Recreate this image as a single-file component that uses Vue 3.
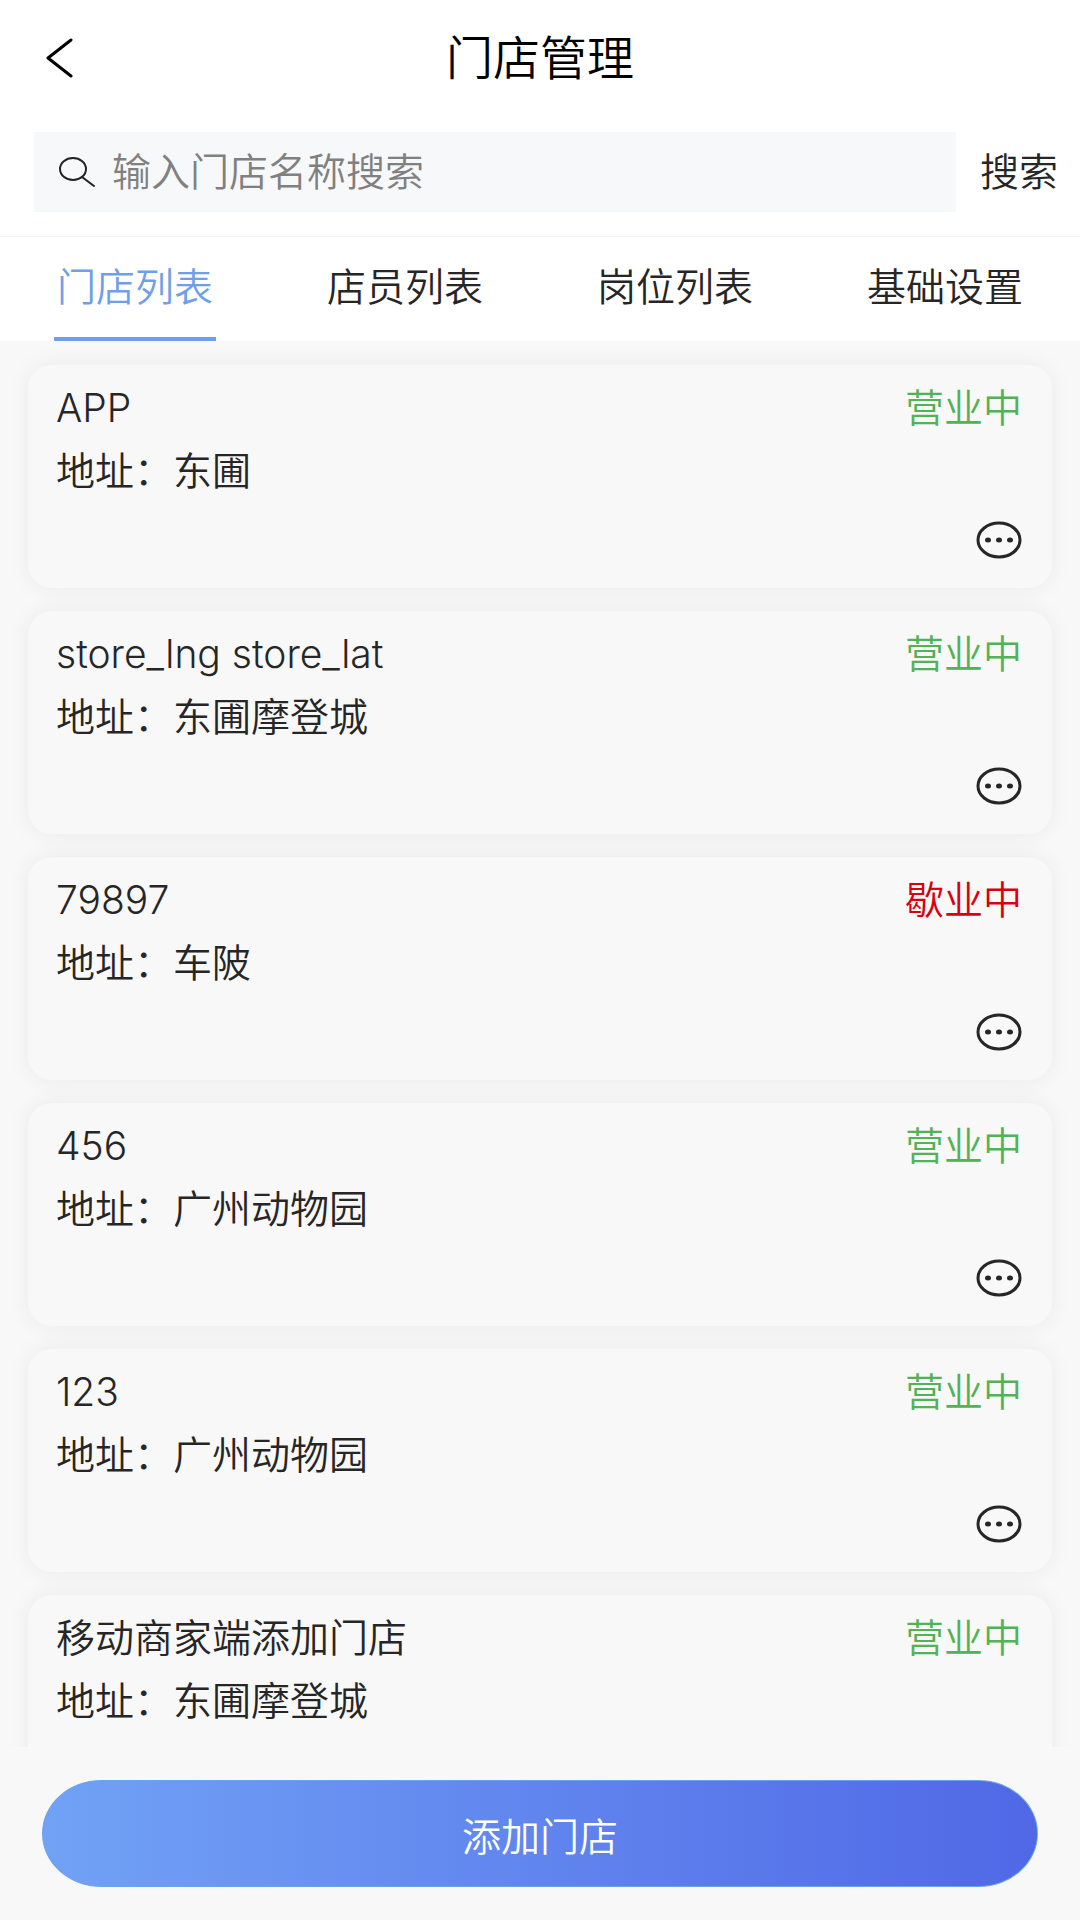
<template>
  <div class="store-page">
    <header class="header">
      <button type="button" class="back-btn" aria-label="返回">
        <svg width="30" height="40" viewBox="0 0 30 40" fill="none">
          <path d="M26 2L3 20L26 38" stroke="#000" stroke-width="3" stroke-linecap="round" stroke-linejoin="round" />
        </svg>
      </button>
      <h1>门店管理</h1>
    </header>

    <form class="search-bar" @submit.prevent="handleSearch">
      <label class="search-box">
        <svg width="38" height="32" viewBox="0 0 38 32" fill="none" stroke="#222" stroke-width="2">
          <ellipse cx="15" cy="13" rx="13" ry="11" />
          <path d="M24 21L36 30" stroke-linecap="round" />
        </svg>
        <input v-model="keyword" type="text" placeholder="输入门店名称搜索" aria-label="输入门店名称搜索">
      </label>
      <button type="submit" class="search-btn">搜索</button>
    </form>

    <nav class="tabs">
      <button
        v-for="(tab, index) in tabs"
        :key="tab"
        type="button"
        class="tab"
        :class="{ active: index === activeTab }"
        @click="activeTab = index"
      >
        <span>{{ tab }}</span>
      </button>
    </nav>

    <main class="store-list">
      <article v-for="store in filteredStores" :key="store.name" class="store-card">
        <div class="store-row">
          <h2>{{ store.name }}</h2>
          <span class="status" :class="{ closed: !store.open }">{{ store.open ? '营业中' : '歇业中' }}</span>
        </div>
        <p>地址：{{ store.address }}</p>
        <button type="button" class="more-btn" aria-label="更多">
          <svg width="46" height="38" viewBox="0 0 46 38">
            <ellipse cx="23" cy="19" rx="21" ry="17" fill="none" stroke="#262626" stroke-width="3" />
            <ellipse cx="12" cy="19" rx="3" ry="2.5" fill="#262626" />
            <ellipse cx="23" cy="19" rx="3" ry="2.5" fill="#262626" />
            <ellipse cx="34" cy="19" rx="3" ry="2.5" fill="#262626" />
          </svg>
        </button>
      </article>
    </main>

    <footer class="footer">
      <button type="button" class="add-btn">添加门店</button>
    </footer>
  </div>
</template>

<script setup>
import { ref, computed } from 'vue'

const tabs = ['门店列表', '店员列表', '岗位列表', '基础设置']
const activeTab = ref(0)
const keyword = ref('')
const query = ref('')

const stores = ref([
  { name: 'APP', address: '东圃', open: true },
  { name: 'store_lng store_lat', address: '东圃摩登城', open: true },
  { name: '79897', address: '车陂', open: false },
  { name: '456', address: '广州动物园', open: true },
  { name: '123', address: '广州动物园', open: true },
  { name: '移动商家端添加门店', address: '东圃摩登城', open: true }
])

const filteredStores = computed(() => stores.value.filter(store => store.name.includes(query.value)))

const handleSearch = () => {
  query.value = keyword.value.trim()
}
</script>

<style>
body {
  margin: 0;
}
</style>

<style scoped>
.store-page {
  display: flex;
  flex-direction: column;
  height: 100vh;
  background: #f8f8f8;
  color: #262626;
  font-family: Inter, "Noto Sans CJK SC", sans-serif;
  font-size: 39px;
  font-weight: 350;
}

button,
input {
  padding: 0;
  border: none;
  background: none;
  color: inherit;
  font: inherit;
}

button {
  cursor: pointer;
}

svg {
  display: block;
}

h1,
h2,
p {
  margin: 0;
  font-size: inherit;
  font-weight: inherit;
}

.header {
  display: grid;
  grid-template-columns: 1fr auto 1fr;
  align-items: center;
  height: 116px;
  padding: 0 45px;
  background: #fff;
}

.back-btn {
  justify-self: start;
}

.header h1 {
  color: #000;
  font-size: 47px;
  line-height: 60px;
}

.search-bar {
  display: flex;
  align-items: center;
  gap: 24px;
  padding: 16px 22px 24px 34px;
  background: #fff;
  border-bottom: 1px solid #f2f2f2;
  line-height: 60px;
}

.search-box {
  display: flex;
  flex: 1;
  align-items: center;
  gap: 16px;
  height: 80px;
  padding: 0 24px;
  background: #f7f8f9;
}

.search-box input {
  flex: 1;
  min-width: 0;
  height: 60px;
  outline: none;
}

.search-box input::placeholder {
  color: #808080;
}

.tabs {
  display: flex;
  background: #fff;
}

.tab {
  display: flex;
  flex: 1;
  justify-content: center;
}

.tab span {
  padding: 0 3px;
  border-bottom: 4px solid transparent;
  line-height: 100px;
}

.tab.active span {
  border-color: #6f9fe8;
  color: #6f9fe8;
}

.store-list {
  display: flex;
  flex: 1;
  flex-direction: column;
  gap: 23px;
  min-height: 0;
  padding: 24px 28px 0;
  overflow: hidden;
}

.store-card {
  display: flex;
  flex-direction: column;
  flex-shrink: 0;
  padding: 11px 30px 29px 28px;
  border-radius: 24px;
  background: #f8f8f8;
  box-shadow: 0 0 24px rgba(0, 0, 0, 0.06);
  line-height: 63px;
}

.store-row {
  display: flex;
  justify-content: space-between;
}

.status {
  color: #53b257;
}

.status.closed {
  color: #d9000f;
}

.more-btn {
  align-self: flex-end;
  margin-top: 19px;
}

.footer {
  padding: 33px 42px;
  background: #f8f8f8;
}

.add-btn {
  display: block;
  width: 100%;
  height: 107px;
  border: 1px solid #6ba3ea;
  border-radius: 60px / 54px;
  background: linear-gradient(90deg, #71a2f6, #5068e6);
  color: #fff;
}
</style>
